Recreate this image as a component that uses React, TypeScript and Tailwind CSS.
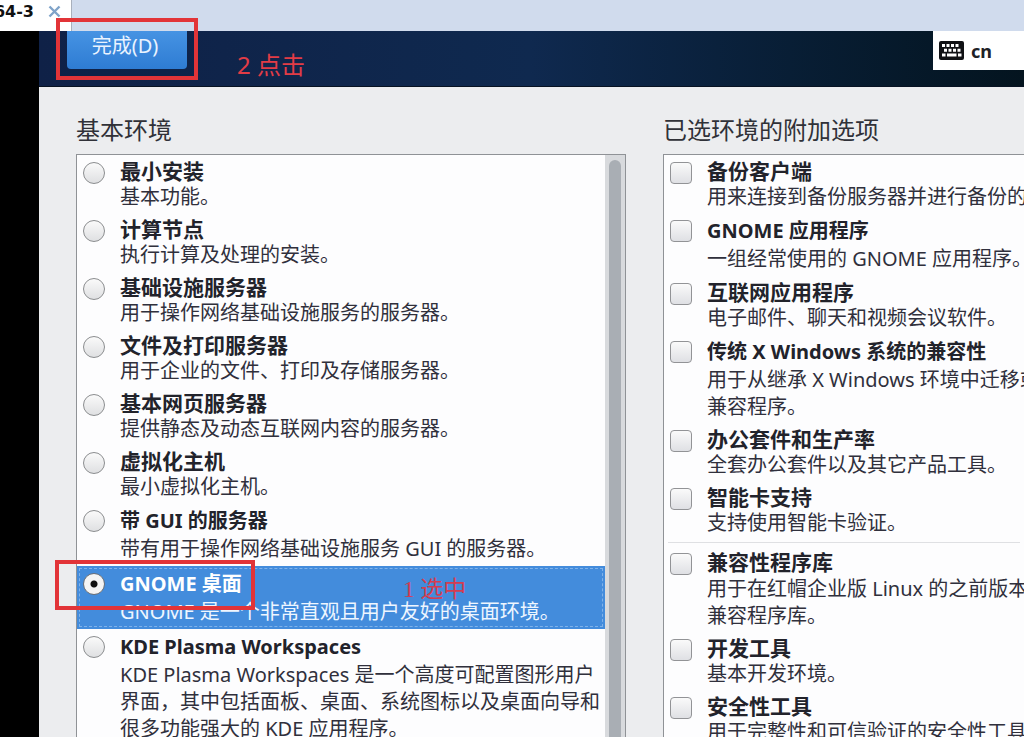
import React from 'react';

type Line = { text: string; tall?: boolean };
type Item = { title: Line; lines: Line[]; ruleBefore?: boolean };

const environments: Item[] = [
  { title: { text: '最小安装' }, lines: [{ text: '基本功能。' }] },
  { title: { text: '计算节点' }, lines: [{ text: '执行计算及处理的安装。' }] },
  { title: { text: '基础设施服务器' }, lines: [{ text: '用于操作网络基础设施服务的服务器。' }] },
  { title: { text: '文件及打印服务器' }, lines: [{ text: '用于企业的文件、打印及存储服务器。' }] },
  { title: { text: '基本网页服务器' }, lines: [{ text: '提供静态及动态互联网内容的服务器。' }] },
  { title: { text: '虚拟化主机' }, lines: [{ text: '最小虚拟化主机。' }] },
  { title: { text: '带 GUI 的服务器', tall: true }, lines: [{ text: '带有用于操作网络基础设施服务 GUI 的服务器。', tall: true }] },
  { title: { text: 'GNOME 桌面', tall: true }, lines: [{ text: 'GNOME 是一个非常直观且用户友好的桌面环境。', tall: true }] },
  {
    title: { text: 'KDE Plasma Workspaces', tall: true },
    lines: [
      { text: 'KDE Plasma Workspaces 是一个高度可配置图形用户', tall: true },
      { text: '界面，其中包括面板、桌面、系统图标以及桌面向导和' },
      { text: '很多功能强大的 KDE 应用程序。', tall: true },
    ],
  },
];

const addons: Item[] = [
  { title: { text: '备份客户端' }, lines: [{ text: '用来连接到备份服务器并进行备份的客户端。' }] },
  { title: { text: 'GNOME 应用程序', tall: true }, lines: [{ text: '一组经常使用的 GNOME 应用程序。', tall: true }] },
  { title: { text: '互联网应用程序' }, lines: [{ text: '电子邮件、聊天和视频会议软件。' }] },
  {
    title: { text: '传统 X Windows 系统的兼容性', tall: true },
    lines: [{ text: '用于从继承 X Windows 环境中迁移或者可用于该环境的', tall: true }, { text: '兼容程序。' }],
  },
  { title: { text: '办公套件和生产率' }, lines: [{ text: '全套办公套件以及其它产品工具。' }] },
  { title: { text: '智能卡支持' }, lines: [{ text: '支持使用智能卡验证。' }] },
  {
    title: { text: '兼容性程序库' },
    ruleBefore: true,
    lines: [{ text: '用于在红帽企业版 Linux 的之前版本中构建的应用程序的', tall: true }, { text: '兼容程序库。' }],
  },
  { title: { text: '开发工具' }, lines: [{ text: '基本开发环境。' }] },
  { title: { text: '安全性工具' }, lines: [{ text: '用于完整性和可信验证的安全性工具。' }] },
];

const SELECTED = 7;

function RowText({ item, selected }: { item: Item; selected?: boolean }) {
  return (
    <span className="block min-w-0 whitespace-nowrap">
      <span
        className={`block font-bold ${item.title.tall ? 'text-[20px] leading-[29px]' : 'text-[21px] leading-[26px]'} ${selected ? 'text-white' : 'text-[#22232b]'}`}
      >
        {item.title.text}
      </span>
      {item.lines.map((line) => (
        <span
          key={line.text}
          className={`block text-[20px] ${line.tall ? 'leading-[28px]' : 'leading-[26px]'} ${selected ? 'text-[#eef6ff]' : 'text-[#30303c]'}`}
        >
          {line.text}
        </span>
      ))}
    </span>
  );
}

function EnvironmentRow({ item, selected }: { item: Item; selected: boolean }) {
  return (
    <li className={selected ? 'relative bg-[#438cdc]' : ''}>
      <label className={`flex gap-[15px] py-[3px] pl-[6px] ${selected ? 'outline-1 -outline-offset-3 outline-dashed outline-[#7fb2ea]' : ''}`}>
        <input
          type="radio"
          name="environment"
          defaultChecked={selected}
          className="mt-[4px] size-[22px] shrink-0 appearance-none rounded-full border border-[#8b8d8f] bg-linear-to-b from-[#fafafa] to-[#dfe0e2] checked:border-[#6c7076] checked:bg-[radial-gradient(circle,#111_0_3px,#f4f4f4_4px)]"
        />
        <RowText item={item} selected={selected} />
      </label>
      {selected && (
        <>
          <div className="pointer-events-none absolute -top-[6px] -left-[22px] h-[50px] w-[200px] border-4 border-[#e23438]" />
          <span className="pointer-events-none absolute top-[9px] left-[326px] font-['Liberation_Serif','Noto_Sans_CJK_SC',serif] text-[23px] leading-[30px] text-[#d43c50]">
            1 选中
          </span>
        </>
      )}
    </li>
  );
}

function AddonRow({ item }: { item: Item }) {
  return (
    <li>
      {item.ruleBefore && <hr className="mx-[4px] mt-[3px] mb-[3px] border-[#dfe0e3]" />}
      <label className="flex gap-[15px] py-[3px] pl-[6px]">
        <input
          type="checkbox"
          className="mt-[4px] size-[22px] shrink-0 appearance-none rounded-[4px] border border-[#929396] bg-linear-to-b from-[#fafafa] to-[#dfe0e4]"
        />
        <RowText item={item} />
      </label>
    </li>
  );
}

function KeyboardIcon() {
  return (
    <svg width="25" height="19" viewBox="0 0 25 19" aria-hidden="true">
      <rect width="25" height="19" rx="2" fill="#101114" />
      <g fill="#fff">
        <path d="M3 3h3v3H3zM7.5 3h3v3h-3zM12 3h3v3h-3zM16.5 3h3v3h-3z" />
        <path d="M5 7.700h3v3H5zM9.500 7.700h3v3h-3zM14 7.700h3v3h-3zM18.500 7.700h3v3h-3z" />
        <path d="M3 12.500h3.500v3H3zM8 12.500h9.500v3H8zM19 12.500h3.500v3H19z" />
      </g>
    </svg>
  );
}

export default function App() {
  return (
    <div className="flex h-screen flex-col overflow-hidden bg-[#d0dbed] font-['Noto_Sans','Noto_Sans_CJK_SC',sans-serif]">
      <div className="flex h-[31px] shrink-0">
        <div className="flex w-[72px] items-center justify-end gap-[14px] border-r border-[#a9b0bc] bg-white pr-[10px] pb-[8px]">
          <span className="font-['DejaVu_Sans','Noto_Sans',sans-serif] text-[16px] leading-[20px] font-bold whitespace-nowrap text-[#111]">64-3</span>
          <button type="button" aria-label="关闭" className="shrink-0">
            <svg width="13" height="13" viewBox="0 0 13 13" fill="none" stroke="#7fa3c9" strokeWidth="2.4" aria-hidden="true">
              <path d="M1.5 1.5l10 10M11.5 1.5l-10 10" />
            </svg>
          </button>
        </div>
      </div>

      <div className="flex min-h-0 flex-1">
        <div className="w-[39px] shrink-0 bg-black" />
        <main className="flex min-w-0 flex-1 flex-col bg-[#ecedef]">
          <header className="flex h-[56px] shrink-0 items-start border-b border-[#071222] bg-linear-to-r from-[#0f2147] via-[#0f294f] to-[#04141f] pl-[28px]">
            <div className="relative">
              <button
                type="button"
                className="h-[38px] w-[120px] rounded-b-[4px] bg-linear-to-b from-[#4693e3] to-[#2e7cd3] pr-[4px] pb-[8px] text-[20px] leading-[30px] text-[#e9f3ff]"
              >
                完成(D)
              </button>
              <div className="pointer-events-none absolute -top-[13px] -left-[11px] h-[62px] w-[142px] border-4 border-[#e23438]" />
            </div>
            <span className="mt-[18px] ml-[50px] text-[24px] leading-[32px] text-[#e23c46]">2 点击</span>
            <button type="button" className="ml-auto flex h-[39px] w-[91px] items-center gap-[7px] bg-white pl-[6px]">
              <KeyboardIcon />
              <span className="text-[18px] leading-[24px] font-bold text-[#202226]">cn</span>
            </button>
          </header>

          <div className="grid min-h-0 flex-1 grid-cols-[minmax(0,550fr)_minmax(0,361fr)] gap-[37px] pt-[27px] pl-[37px]">
            <section className="flex min-h-0 flex-col">
              <h2 className="mb-[8px] text-[24px] leading-[32px] text-[#303138]">基本环境</h2>
              <div className="flex min-h-0 flex-1 border border-b-0 border-[#8f9296] bg-[#fdfdfe]">
                <ul className="min-w-0 flex-1">
                  {environments.map((item, i) => (
                    <EnvironmentRow key={item.title.text} item={item} selected={i === SELECTED} />
                  ))}
                </ul>
                <div className="w-[20px] shrink-0 bg-[#d8dadd] px-[4px] pt-[5px]">
                  <div className="h-full rounded-t-full bg-[#a9aeb4]" />
                </div>
              </div>
            </section>
            <section className="flex min-h-0 flex-col">
              <h2 className="mb-[8px] text-[24px] leading-[32px] text-[#303138]">已选环境的附加选项</h2>
              <div className="min-h-0 flex-1 overflow-hidden border border-r-0 border-b-0 border-[#8f9296] bg-[#fdfdfe]">
                <ul>
                  {addons.map((item) => (
                    <AddonRow key={item.title.text} item={item} />
                  ))}
                </ul>
              </div>
            </section>
          </div>
        </main>
      </div>
    </div>
  );
}
